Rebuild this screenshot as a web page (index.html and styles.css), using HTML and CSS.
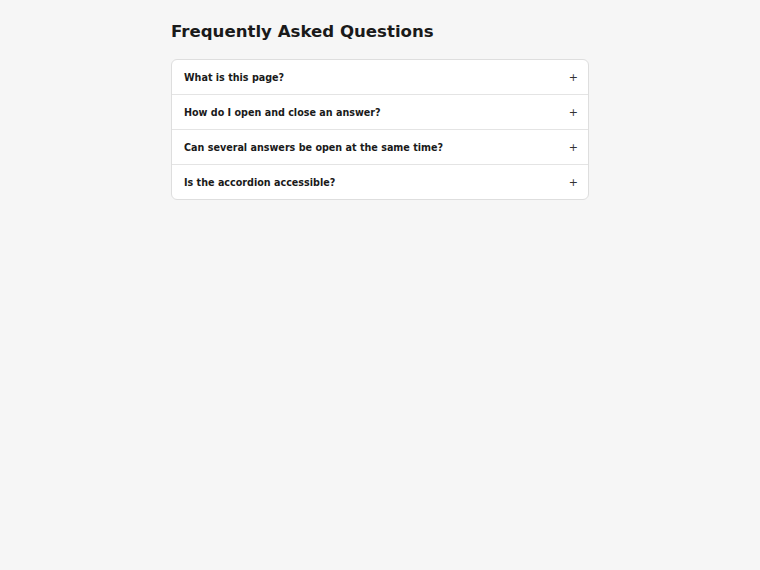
FILE: index.html
```html
<!DOCTYPE html>
<html>
<head>
  <title>FAQ</title>
  <meta charset="UTF-8">
  <meta name="viewport" content="width=device-width, initial-scale=1.0">
  <link rel="stylesheet" href="styles.css">
</head>
<body>
<div class="wrap">
  <h1>Frequently Asked Questions</h1>
  <div class="accordion">
    <button class="item"><span>What is this page?</span><span class="sign">+</span></button>
    <button class="item"><span>How do I open and close an answer?</span><span class="sign">+</span></button>
    <button class="item"><span>Can several answers be open at the same time?</span><span class="sign">+</span></button>
    <button class="item"><span>Is the accordion accessible?</span><span class="sign">+</span></button>
  </div>
</div>
</body>
</html>
```
FILE: styles.css
```css
body {
  font-family: "DejaVu Sans", sans-serif;
  background: #f6f6f6;
  color: #1a1a1a;
  margin: 0;
  padding: 21px 0;
}
.wrap {
  max-width: 418px;
  margin: 0 auto;
}
h1 {
  font-size: 16.6px;
  line-height: 22px;
  margin: 0 0 16px;
}
.accordion {
  background: white;
  border: 1px solid #dedede;
  border-radius: 6px;
  overflow: hidden;
}
.item {
  display: flex;
  justify-content: space-between;
  align-items: center;
  width: 100%;
  padding: 11px 10px 9px 12px;
  border: none;
  border-bottom: 1px solid #e4e4e4;
  background: none;
  font-family: inherit;
  font-size: 9.6px;
  font-weight: bold;
  line-height: 14px;
  color: #1a1a1a;
  text-align: left;
}
.item:last-child {
  border-bottom: none;
}
.sign {
  font-weight: normal;
  font-size: 11px;
  color: #333;
}
```
